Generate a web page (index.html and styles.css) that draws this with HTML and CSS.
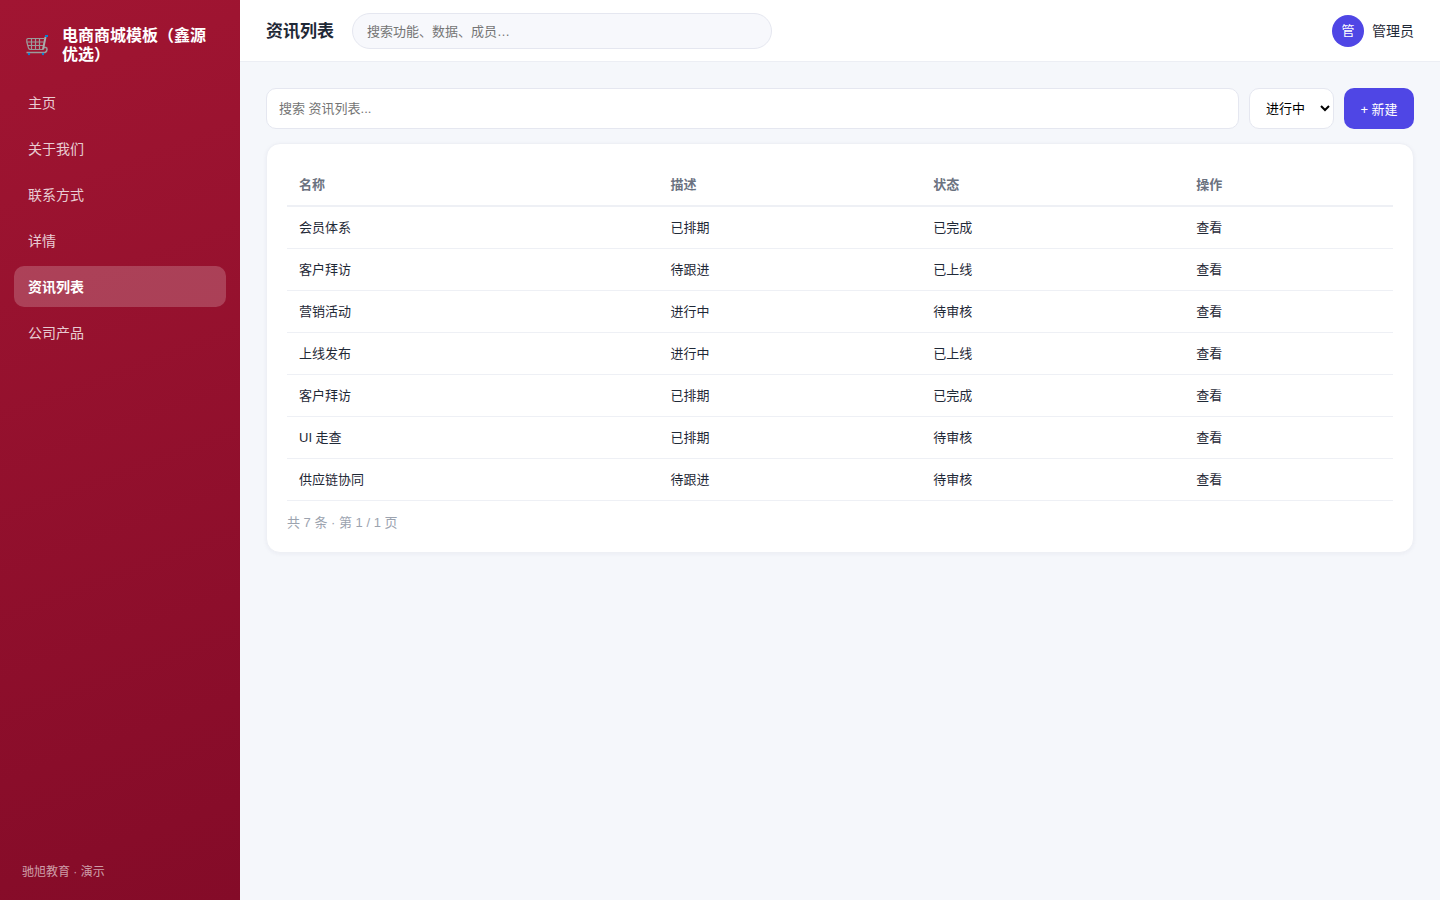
FILE: index.html
```html
<!DOCTYPE html>
<html lang="zh-CN">
<head>
  <meta charset="UTF-8">
  <meta name="viewport" content="width=device-width, initial-scale=1">
  <title>资讯列表</title>
  <link rel="stylesheet" href="styles.css">
</head>
<body>
  <aside class="sidebar">
    <div class="brand">
      <svg class="brand-icon" viewBox="0 0 22 22" aria-hidden="true">
        <g fill="none" stroke="#9b9b9b" stroke-width="1.2" stroke-linejoin="round">
          <path d="M17 15.500 H4.500 Q3 15.500 2.500 14 L0.800 8 V5.500 Q0.800 4.500 2 4.500 H18"/>
          <path d="M1 8 H17.500 M2 11.500 H17 M5.500 4.500 V15.500 M9.500 4.500 V15.500 M13.500 4.500 V15.500"/>
          <path d="M18 13.500 H20 Q21 13.500 21 15.500 Q21 17.500 19 18.500 H0.500" stroke-width="1.6"/>
        </g>
        <path d="M19.500 3 L17 15.500" fill="none" stroke="#ababab" stroke-width="2"/>
        <rect x="19" y="1" width="3" height="2" fill="#0c7fd0"/>
        <circle cx="3" cy="20" r="1.200" fill="#0c7fd0"/>
        <circle cx="17" cy="20" r="1.200" fill="#0c7fd0"/>
      </svg>
      <span class="brand-name">电商商城模板（鑫源优选）</span>
    </div>
    <nav class="menu">
      <a href="#">主页</a>
      <a href="#">关于我们</a>
      <a href="#">联系方式</a>
      <a href="#">详情</a>
      <a href="#" class="active">资讯列表</a>
      <a href="#">公司产品</a>
    </nav>
    <div class="sidebar-foot">驰旭教育 · 演示</div>
  </aside>
  <div class="content">
    <header class="topbar">
      <h1>资讯列表</h1>
      <input class="global-search" type="search" aria-label="全局搜索" placeholder="搜索功能、数据、成员…">
      <div class="user">
        <span class="avatar">管</span>
        <span>管理员</span>
      </div>
    </header>
    <main>
      <div class="toolbar">
        <input type="text" aria-label="搜索资讯列表" placeholder="搜索 资讯列表...">
        <select aria-label="状态">
          <option>进行中</option>
        </select>
        <button type="button">+ 新建</button>
      </div>
      <section class="card">
        <table>
          <thead>
            <tr><th>名称</th><th>描述</th><th>状态</th><th>操作</th></tr>
          </thead>
          <tbody>
            <tr><td>会员体系</td><td>已排期</td><td>已完成</td><td><a href="#">查看</a></td></tr>
            <tr><td>客户拜访</td><td>待跟进</td><td>已上线</td><td><a href="#">查看</a></td></tr>
            <tr><td>营销活动</td><td>进行中</td><td>待审核</td><td><a href="#">查看</a></td></tr>
            <tr><td>上线发布</td><td>进行中</td><td>已上线</td><td><a href="#">查看</a></td></tr>
            <tr><td>客户拜访</td><td>已排期</td><td>已完成</td><td><a href="#">查看</a></td></tr>
            <tr><td>UI 走查</td><td>已排期</td><td>待审核</td><td><a href="#">查看</a></td></tr>
            <tr><td>供应链协同</td><td>待跟进</td><td>待审核</td><td><a href="#">查看</a></td></tr>
          </tbody>
        </table>
        <div class="pager">共 7 条 · 第 1 / 1 页</div>
      </section>
    </main>
  </div>
</body>
</html>
```
FILE: styles.css
```css
* {
  box-sizing: border-box;
}
body {
  margin: 0;
  min-height: 100vh;
  display: flex;
  background: #f5f7fb;
  color: #1f2937;
  font-family: "Liberation Sans", "Noto Sans CJK SC", sans-serif;
  font-size: 14px;
  line-height: 20px;
}
input, select, button {
  font-family: inherit;
  font-size: 13px;
}
a {
  color: inherit;
  text-decoration: none;
}

/* sidebar */
.sidebar {
  width: 240px;
  flex-shrink: 0;
  display: flex;
  flex-direction: column;
  padding: 26px 14px 18px;
  background: linear-gradient(160deg, #a11532, #840b28);
  color: #fff;
}
.brand {
  display: flex;
  align-items: center;
  gap: 14px;
  padding: 0 10px 18px 12px;
}
.brand-icon {
  width: 22px;
  height: 22px;
  flex-shrink: 0;
}
.brand-name {
  font-size: 16px;
  font-weight: 700;
  line-height: 19px;
}
.menu {
  display: flex;
  flex-direction: column;
  gap: 5px;
}
.menu a {
  padding: 11px 14px 9px;
  border-radius: 10px;
  line-height: 21px;
  color: rgba(255, 255, 255, 0.8);
}
.menu a.active {
  background: rgba(255, 255, 255, 0.2);
  color: #fff;
  font-weight: 700;
}
.sidebar-foot {
  margin-top: auto;
  padding: 0 8px;
  font-size: 12px;
  color: rgba(255, 255, 255, 0.6);
}

/* top bar */
.content {
  flex: 1;
  min-width: 0;
}
.topbar {
  display: flex;
  align-items: center;
  gap: 18px;
  padding: 13px 26px 12px;
  background: #fff;
  border-bottom: 1px solid #eceef4;
}
.topbar h1 {
  margin: 0;
  padding-top: 2px;
  font-size: 17px;
  font-weight: 700;
}
.global-search {
  flex: 0 1 420px;
  height: 36px;
  padding: 0 14px;
  border: 1px solid #e5e7f0;
  border-radius: 18px;
  background: #f7f8fc;
}
.user {
  display: flex;
  align-items: center;
  gap: 8px;
  margin-left: auto;
}
.avatar {
  width: 32px;
  height: 32px;
  border-radius: 50%;
  background: #4f46e5;
  color: #fff;
  font-size: 13px;
  line-height: 32px;
  text-align: center;
}

/* list page */
main {
  padding: 26px;
}
.toolbar {
  display: flex;
  gap: 10px;
  margin-bottom: 14px;
}
.toolbar input, .toolbar select {
  height: 41px;
  border: 1px solid #e5e7f0;
  border-radius: 10px;
  background: #fff;
}
.toolbar input {
  flex: 1;
  min-width: 0;
  padding: 0 12px;
}
.toolbar select {
  width: 85px;
  padding: 0 0 0 12px;
  color: #000;
}
.toolbar button {
  width: 70px;
  padding: 0;
  border: 0;
  border-radius: 10px;
  background: #4f46e5;
  color: #fff;
}
.card {
  padding: 20px 20px 19px;
  border: 1px solid #eef0f5;
  border-radius: 14px;
  background: #fff;
  box-shadow: 0 1px 4px rgba(30, 40, 90, 0.05);
}
table {
  width: 100%;
  border-collapse: separate;
  border-spacing: 0;
  font-size: 13px;
}
th, td {
  padding: 11px 12px 10px;
  text-align: left;
  border-bottom: 1px solid #eef0f5;
}
th {
  border-bottom-width: 2px;
  color: #6b7280;
  font-weight: 700;
}
.pager {
  margin-top: 12px;
  font-size: 13px;
  color: #9ca3af;
}
```
